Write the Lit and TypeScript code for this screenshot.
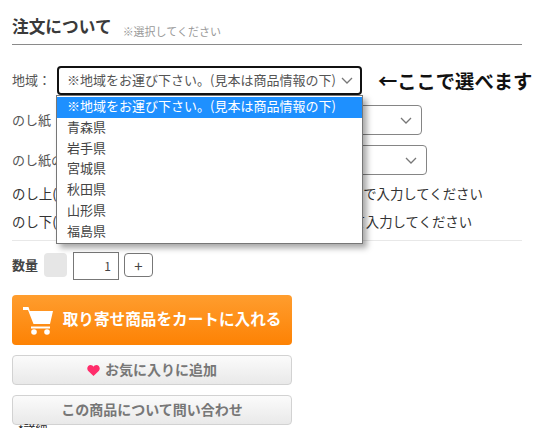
import { LitElement, html, css } from "lit";
import { customElement } from "lit/decorators.js";

const chevron = html`<svg class="chev" width="12" height="7" viewBox="0 0 12 7"><path d="M1 1l5 5 5-5" fill="none" stroke="#777" stroke-width="1.300"/></svg>`;
const OPTIONS = ["青森県", "岩手県", "宮城県", "秋田県", "山形県", "福島県"];
const FIRST = "※地域をお運び下さい。(見本は商品情報の下)";

@customElement("app-root")
export class AppRoot extends LitElement {
  static styles = css`
    :host {
      display: block;
      position: relative;
      width: 545px;
      height: 428px;
      overflow: hidden;
      background: #fff;
      font-family: "Noto Sans CJK JP", "Liberation Sans", sans-serif;
      color: #444;
      font-size: 13px;
    }
    .page { width: 510px; padding: 14px 0 0 12px; display: flex; flex-direction: column; }
    .head {
      display: flex; align-items: flex-start; gap: 11px; height: 30px;
      border-bottom: 1px solid #8a8a8a; width: 510px;
    }
    .head b { font-size: 16.700px; line-height: 24px; color: #3a3a3a; }
    .head span { font-size: 11px; line-height: 16px; margin-top: 9px; color: #999; }
    .row { display: flex; align-items: center; }
    .r1 { margin-top: 21px; height: 29px; }
    .r2 { margin-top: 10px; height: 30px; }
    .r3 { margin-top: 10px; height: 30px; }
    .r4 { margin-top: 8px; height: 20px; }
    .r5 { margin-top: 8px; height: 20px; }
    .label { width: 45px; flex: none; white-space: nowrap; color: #555; padding-bottom: 2px; }
    .sel {
      box-sizing: border-box; height: 100%; display: flex; align-items: center;
      justify-content: space-between; background: #fff;
      border: 1px solid #858585; border-radius: 4px; padding: 0 9px 0 8px; flex: none;
    }
    .sel.open { border: 2px solid #111; width: 305px; padding: 0 7px 0 8px; color: #555; white-space: nowrap; }
    .sel.open span { padding-bottom: 2px; }
    .w2 { width: 365px; }
    .w3 { width: 370px; }
    .note { color: #333; white-space: nowrap; font-size: 13.400px; }
    .aim {
      margin-left: 16px; font-size: 19.300px; font-weight: 700; color: #111; white-space: nowrap;
      line-height: 26px;
    }
    hr { margin: 9px 0 0; border: 0; border-top: 1px solid #e8e8e8; width: 510px; }
    .qty { margin-top: 11px; height: 28px; gap: 5px; }
    .qty b { font-size: 13px; color: #444; margin-right: 1px; padding-bottom: 3px; }
    .minus { width: 23px; height: 24px; background: #e6e6e6; border-radius: 4px; margin-top: -2px; margin-right: 1px; }
    .num {
      box-sizing: border-box; width: 46px; height: 28px; border: 1px solid #777;
      display: flex; align-items: center; justify-content: flex-end; padding: 0 7px 2px 0; font-size: 12px;
    }
    .plus {
      box-sizing: border-box; width: 29px; height: 24px; border: 1px solid #777; border-radius: 4px;
      display: flex; align-items: center; justify-content: center; font-size: 15px; margin-top: -2px;
    }
    .btn {
      box-sizing: border-box; width: 280px; display: flex; align-items: center; justify-content: center;
      border-radius: 4px; font-weight: 700;
    }
    .btn span { padding-bottom: 3px; }
    .buy {
      margin-top: 15px; height: 50px; gap: 10px; color: #fff; font-size: 15.640px;
      background: linear-gradient(#ff9d2e, #fd8204);
    }
    .sub {
      margin-top: 10px; height: 30px; gap: 5px; color: #777; font-size: 14px;
      border: 1px solid #d2d2d2; background: linear-gradient(#fbfbfb, #e9e9e9);
    }
    .drop {
      position: absolute; left: 56px; top: 95px; width: 307px; height: 149px; box-sizing: border-box;
      background: #fff; border: 1px solid #777; box-shadow: 4px 4px 6px rgba(0,0,0,.35);
      padding-top: 1px;
    }
    .opt { height: 20.800px; line-height: 18px; padding-left: 10px; color: #444; white-space: nowrap; }
    .opt.on { background: #1e90ff; color: #fff; }
    .foot { font-size: 12px; color: #222; padding-left: 6px; line-height: 12px; margin-top: -1px; }
  `;

  render() {
    return html`
      <div class="page">
        <div class="head"><b>注文について</b><span>※選択してください</span></div>
        <div class="row r1">
          <span class="label">地域：</span>
          <div class="sel open"><span>${FIRST}</span>${chevron}</div>
          <span class="aim">←ここで選べます</span>
        </div>
        <div class="row r2"><span class="label">のし紙</span><div class="sel w2"><span></span>${chevron}</div></div>
        <div class="row r3"><span class="label">のし紙の</span><div class="sel w3"><span></span>${chevron}</div></div>
        <div class="row r4 note">のし上(例：御祝・内祝など）の文字を全角で 120文字以内で入力してください</div>
        <div class="row r5 note">のし下(例：お名前など）の文字を全角で20文字以内にして入力してください</div>
        <hr />
        <div class="row qty">
          <b>数量</b><div class="minus"></div><div class="num">1</div><div class="plus">+</div>
        </div>
        <div class="btn buy">
          <svg width="30" height="30" viewBox="0 0 30 30">
            <path d="M0 2h5.500l1.300 4H30l-3 13H10.500L5 5H0z" fill="#fff"/>
            <path d="M8 21.500h19v2H8z" fill="#fff"/>
            <circle cx="11" cy="27" r="2.800" fill="#fff"/><circle cx="24" cy="27" r="2.800" fill="#fff"/>
          </svg>
          <span>取り寄せ商品をカートに入れる</span>
        </div>
        <div class="btn sub">
          <svg width="13" height="11" viewBox="0 0 14 12"><path d="M7 12L1 6.200C-1 3.500 1 0 3.800 0 5.300 0 6.400.8 7 2 7.600.8 8.700 0 10.200 0 13 0 15 3.500 13 6.200z" fill="#ff2d6b"/></svg>
          <span>お気に入りに追加</span>
        </div>
        <div class="btn sub"><span>この商品について問い合わせ</span></div>
        <div class="foot">*詳細</div>
      </div>
      <div class="drop">
        <div class="opt on">${FIRST}</div>
        ${OPTIONS.map((o) => html`<div class="opt">${o}</div>`)}
      </div>
    `;
  }
}
